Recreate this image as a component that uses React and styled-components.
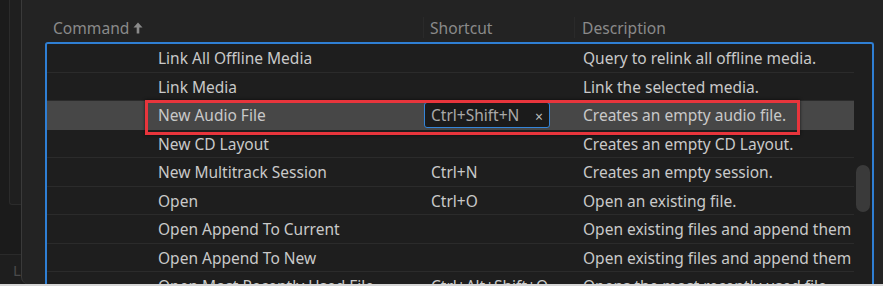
import React from 'react';
import styled, { createGlobalStyle } from 'styled-components';

const GlobalStyle = createGlobalStyle`
	html, body {
		margin: 0;
		padding: 0;
		background: #d6d6d6;
		overflow: hidden;
	}
	body {
		font-family: "Noto Sans", Lato, sans-serif;
	}
`

const Page = styled.div`
	display: flex;
	width: 883px;
	height: 284px;
	background: #1c1c1c;
	overflow: hidden;
`

// background app peeking out on the left
const SidePanel = styled.div`
	width: 21px;
	flex: none;
	display: flex;
	flex-direction: column;
	background: #1b1b1b;
`

const SideTop = styled.div`
	height: 255px;
	border-bottom: 1px solid #2a2a2a;
	box-sizing: border-box;
`

const SideInner = styled.div`
	margin-left: 9px;
	height: 205px;
	background: #1f1f1f;
	border-left: 1px solid #2b2b2b;
	border-bottom: 1px solid #2b2b2b;
	border-bottom-left-radius: 3px;
	box-sizing: border-box;
`

const SideBottom = styled.div`
	flex: 1;
	padding: 5px 0 0 13px;
	overflow: hidden;
	background: #1e1e1e;
	color: #4a4a4a;
	font-size: 15px;
	line-height: 20px;
	white-space: nowrap;
`

const Dialog = styled.div`
	flex: 1;
	background: #232323;
	border-left: 1px solid #3a3a3a;
	border-bottom-left-radius: 7px;
	padding: 15px 0 0 23px;
	display: flex;
	flex-direction: column;
	min-width: 0;
`

const Columns = `
	display: grid;
	grid-template-columns: 376px 151px 1fr;
`

const HeaderRow = styled.div`
	${Columns}
	margin-left: 2px;
	width: 825px;
	height: 26px;
	margin-bottom: 1px;
`

const HeaderCell = styled.div`
	display: flex;
	align-items: center;
	gap: 4px;
	padding-left: ${p => p.$pad}px;
	border-left: ${p => (p.$divider ? '1px solid #2a2a2a' : 'none')};
	color: #8a8a8a;
	font-size: 15.6px;
	height: 21px;
	margin-top: 2px;
`

const Table = styled.div`
	display: flex;
	width: 825px;
	flex: 1;
	border: 2px solid #2f7fd4;
	border-bottom: none;
	border-radius: 3px 3px 0 0;
	background: #1e1e1e;
	min-height: 0;
`

const RowList = styled.div`
	flex: 1;
	overflow: hidden;
`

const Row = styled.div`
	${Columns}
	position: relative;
	height: 28.5px;
	box-sizing: border-box;
	border-bottom: 1px solid ${p => (p.$selected ? '#474747' : '#2b2b2b')};
	background: ${p => (p.$selected ? '#474747' : 'transparent')};
	color: #c9c9c9;
	font-size: 15.5px;
	align-items: center;
`

const Cell = styled.div`
	padding-left: ${p => p.$pad}px;
	white-space: nowrap;
	overflow: hidden;
	margin-top: 1px;
`

const KeyEditor = styled.div`
	display: flex;
	align-items: center;
	justify-content: space-between;
	margin-left: 1px;
	width: 126px;
	height: 26px;
	box-sizing: border-box;
	padding: 1px 6px 0 6px;
	border: 1px solid #3585d8;
	border-radius: 3px;
	background: #1b1b1b;
	color: #a9a9a9;
`

const ClearX = styled.span`
	font-size: 14px;
	color: #bdbdbd;
	margin-top: 2px;
`

const Callout = styled.div`
	position: absolute;
	left: 98px;
	top: -1px;
	width: 655px;
	height: 35px;
	box-sizing: border-box;
	border: 3px solid #e8353c;
	box-shadow: 0 0 3px rgba(0, 0, 0, 0.7);
	pointer-events: none;
`

const ScrollTrack = styled.div`
	width: 18px;
	flex: none;
	padding: 121px 0 0 2px;
	box-sizing: border-box;
`

const Thumb = styled.div`
	width: 14px;
	height: 47px;
	border-radius: 7px;
	background: #3a3a3a;
`

const rows = [
	{ cmd: 'Link All Offline Media', desc: 'Query to relink all offline media.' },
	{ cmd: 'Link Media', desc: 'Link the selected media.' },
	{ cmd: 'New Audio File', key: 'Ctrl+Shift+N', desc: 'Creates an empty audio file.', selected: true },
	{ cmd: 'New CD Layout', desc: 'Creates an empty CD Layout.' },
	{ cmd: 'New Multitrack Session', key: 'Ctrl+N', desc: 'Creates an empty session.' },
	{ cmd: 'Open', key: 'Ctrl+O', desc: 'Open an existing file.' },
	{ cmd: 'Open Append To Current', desc: 'Open existing files and append them' },
	{ cmd: 'Open Append To New', desc: 'Open existing files and append them' },
	{ cmd: 'Open Most Recently Used File', key: 'Ctrl+Alt+Shift+O', desc: 'Opens the most recently used file.' },
]

function SortArrow() {
	return (
		<svg width="10" height="12" viewBox="0 0 10 12">
			<path d="M5 0.5 L9.5 5.5 L6.3 5.5 L6.3 11.5 L3.7 11.5 L3.7 5.5 L0.5 5.5 Z" fill="#8a8a8a" />
		</svg>
	)
}

export default function App() {
	return (
		<>
			<GlobalStyle />
			<Page>
				<SidePanel>
					<SideTop>
						<SideInner />
					</SideTop>
					<SideBottom>L</SideBottom>
				</SidePanel>
				<Dialog>
					<HeaderRow>
						<HeaderCell $pad={6}>Command <SortArrow /></HeaderCell>
						<HeaderCell $pad={6} $divider>Shortcut</HeaderCell>
						<HeaderCell $pad={7} $divider>Description</HeaderCell>
					</HeaderRow>
					<Table>
						<RowList>
							{rows.map(r => (
								<Row key={r.cmd} $selected={r.selected}>
									<Cell $pad={111}>{r.cmd}</Cell>
									{r.selected ? (
										<div>
											<KeyEditor>{r.key}<ClearX>×</ClearX></KeyEditor>
										</div>
									) : (
										<Cell $pad={8}>{r.key}</Cell>
									)}
									<Cell $pad={9}>{r.desc}</Cell>
									{r.selected && <Callout />}
								</Row>
							))}
						</RowList>
						<ScrollTrack>
							<Thumb />
						</ScrollTrack>
					</Table>
				</Dialog>
			</Page>
		</>
	);
}
